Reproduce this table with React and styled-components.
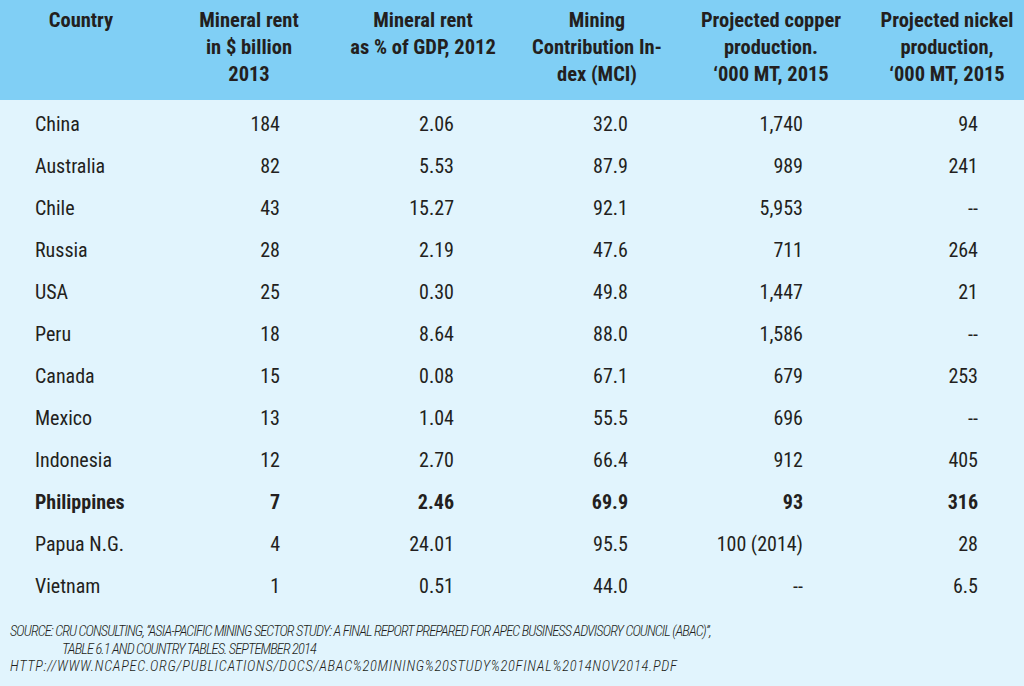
import React from 'react'
import styled, { createGlobalStyle } from 'styled-components'

const Global = createGlobalStyle`
  html, body { margin: 0; padding: 0; }
  body {
    background: #e1f4fd;
    font-family: "Roboto Condensed", "Liberation Sans Narrow", "DejaVu Sans Condensed", sans-serif;
    color: #231f20;
  }
`

const Page = styled.div`
  width: 1024px;
  height: 686px;
  background: #e1f4fd;
  overflow: hidden;
`

const cols = '162px 174px 174px 174px 174px 1fr'

const Head = styled.div`
  display: grid;
  grid-template-columns: ${cols};
  height: 100px;
  box-sizing: border-box;
  padding-top: 7px;
  background: #80cff5;
`

const HeadCell = styled.div`
  text-align: center;
  font-weight: bold;
  font-size: 20.5px;
  line-height: 27px;
  white-space: nowrap;
  padding-left: ${p => p.$pl || 0}px;
`

const Body = styled.div`
  padding-top: 3px;
`

const Row = styled.div`
  display: grid;
  grid-template-columns: ${cols};
  height: 42px;
  align-items: center;
  font-size: 20px;
  font-weight: ${p => (p.$bold ? 'bold' : 'normal')};
`

const Name = styled.div`
  padding-left: 35px;
`

const Num = styled.div`
  text-align: right;
  padding-right: ${p => p.$pr}px;
`

const Source = styled.div`
  padding: 16px 0 0 10px;
  font-style: italic;
  font-weight: 300;
  font-size: 14.5px;
  letter-spacing: -0.9px;
  line-height: 17.5px;
  text-transform: uppercase;
  white-space: nowrap;
`

const Indent = styled.div`
  padding-left: 52px;
`

const Url = styled.div`
  letter-spacing: 0.7px;
`

const rows = [
  ['China', '184', '2.06', '32.0', '1,740', '94'],
  ['Australia', '82', '5.53', '87.9', '989', '241'],
  ['Chile', '43', '15.27', '92.1', '5,953', '--'],
  ['Russia', '28', '2.19', '47.6', '711', '264'],
  ['USA', '25', '0.30', '49.8', '1,447', '21'],
  ['Peru', '18', '8.64', '88.0', '1,586', '--'],
  ['Canada', '15', '0.08', '67.1', '679', '253'],
  ['Mexico', '13', '1.04', '55.5', '696', '--'],
  ['Indonesia', '12', '2.70', '66.4', '912', '405'],
  ['Philippines', '7', '2.46', '69.9', '93', '316', true],
  ['Papua N.G.', '4', '24.01', '95.5', '100 (2014)', '28'],
  ['Vietnam', '1', '0.51', '44.0', '--', '6.5'],
]

const pads = [56, 56, 56, 55, 46]

export default function App() {
  return (
    <Page>
      <Global />
      <Head>
        <HeadCell>Country</HeadCell>
        <HeadCell>Mineral rent<br />in $ billion<br />2013</HeadCell>
        <HeadCell>Mineral rent<br />as % of GDP, 2012</HeadCell>
        <HeadCell>Mining<br />Contribution In-<br />dex (MCI)</HeadCell>
        <HeadCell>Projected copper<br />production.<br />‘000 MT, 2015</HeadCell>
        <HeadCell $pl={12}>Projected nickel<br />production,<br />‘000 MT, 2015</HeadCell>
      </Head>
      <Body>
        {rows.map(r => (
          <Row key={r[0]} $bold={r[6]}>
            <Name>{r[0]}</Name>
            {r.slice(1, 6).map((v, i) => (
              <Num key={i} $pr={pads[i]}>{v}</Num>
            ))}
          </Row>
        ))}
      </Body>
      <Source>
        <div>Source: CRU Consulting, “Asia-Pacific Mining Sector Study: A Final Report prepared for APEC Business Advisory Council (ABAC)”,</div>
        <Indent>Table 6.1 and country tables. September 2014</Indent>
        <Url>http://www.ncapec.org/publications/docs/ABAC%20Mining%20Study%20Final%2014Nov2014.pdf</Url>
      </Source>
    </Page>
  )
}
